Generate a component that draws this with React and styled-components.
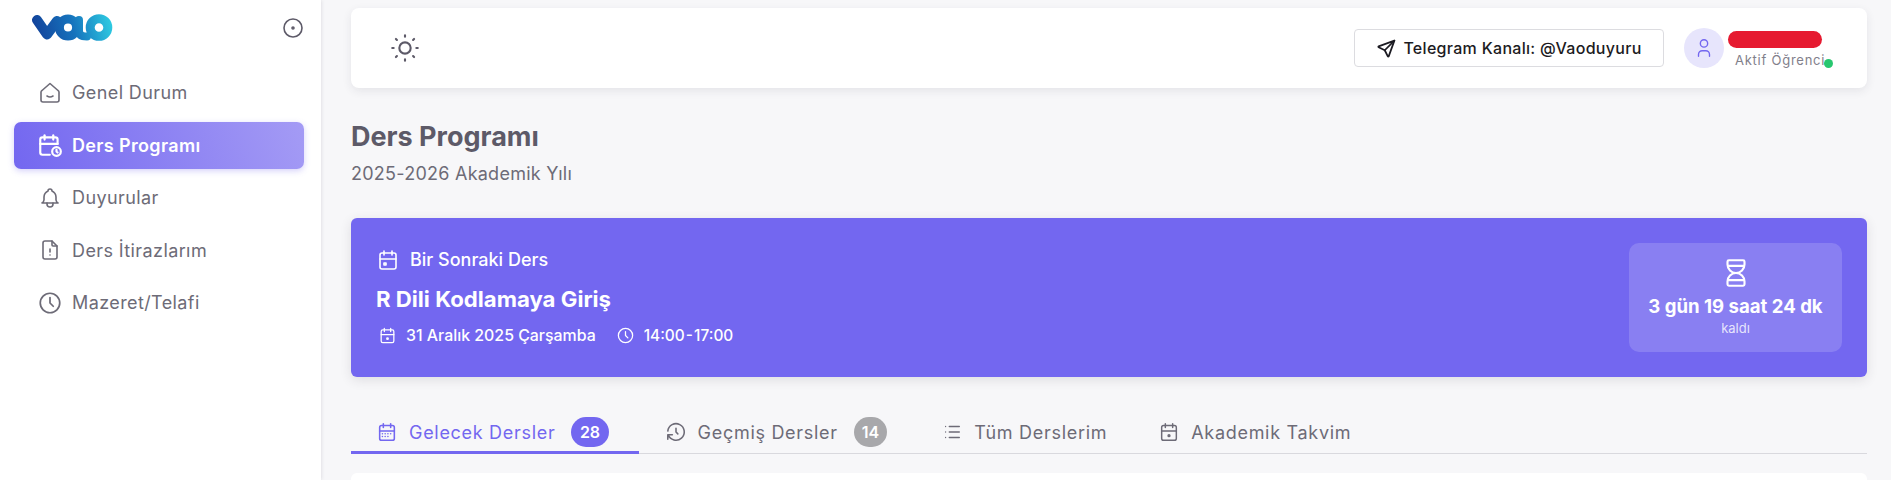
import React from "react";
import styled, { createGlobalStyle } from "styled-components";
import {
  TbBell,
  TbCalendarDue,
  TbCalendarEvent,
  TbCalendarMonth,
  TbCalendarTime,
  TbCircleDot,
  TbClock,
  TbFileAlert,
  TbHistory,
  TbHourglass,
  TbList,
  TbSend,
  TbSun,
  TbUser,
} from "react-icons/tb";

const GlobalStyle = createGlobalStyle`
  html, body {
    margin: 0;
    height: 480px;
    overflow: hidden;
    background: #f7f7f9;
    font-family: "Inter", "Liberation Sans", sans-serif;
  }
`;

const Page = styled.div`
  display: flex;
  width: 1891px;
  height: 480px;
  overflow: hidden;
`;

const Sidebar = styled.aside`
  flex: 0 0 321px;
  box-sizing: border-box;
  padding: 0 17px 0 14px;
  background: #fff;
  box-shadow: 0 0 4px rgba(47, 43, 61, 0.16);
`;

const LogoRow = styled.div`
  display: flex;
  align-items: center;
  justify-content: space-between;
  height: 56px;
  margin-right: -1px;
  padding-left: 17px;
  color: #5d5a68;
`;

const Nav = styled.nav`
  display: flex;
  flex-direction: column;
  gap: 9.5px;
  margin-top: 15px;
`;

const NavItem = styled.a`
  display: flex;
  align-items: center;
  gap: 10px;
  height: ${(p) => (p.$active ? "47px" : "43px")};
  margin: ${(p) => (p.$active ? "-2px 0" : "0")};
  padding: 0 0 0 24px;
  box-sizing: border-box;
  border-radius: 7px;
  font-size: 18px;
  font-weight: ${(p) => (p.$active ? 600 : 400)};
  letter-spacing: ${(p) => (p.$active ? "0.35px" : "0.4px")};
  color: ${(p) => (p.$active ? "#fff" : "#6d6b77")};
  background: ${(p) =>
    p.$active ? "linear-gradient(72deg, #7367f0, #a49bf5)" : "transparent"};
  box-shadow: ${(p) => (p.$active ? "0 2px 6px rgba(115, 103, 240, 0.3)" : "none")};
`;

const NavIcon = styled.span`
  display: flex;
  align-items: center;
  justify-content: center;
  width: 24px;
  overflow: visible;
  svg {
    flex: none;
  }
`;

const Main = styled.main`
  flex: 1;
  min-width: 0;
  box-sizing: border-box;
  padding: 8px 24px 0 30px;
`;

const Header = styled.header`
  display: flex;
  align-items: center;
  justify-content: space-between;
  height: 80px;
  box-sizing: border-box;
  padding: 0 40px 0 37px;
  background: #fff;
  border-radius: 8px;
  box-shadow: 0 3px 10px rgba(47, 43, 61, 0.09);
  color: #5d5a68;
`;

const HeaderRight = styled.div`
  display: flex;
  align-items: center;
  gap: 20px;
  margin-right: 5px;
`;

const TelegramButton = styled.button`
  display: flex;
  align-items: center;
  justify-content: center;
  gap: 6px;
  width: 310px;
  height: 38px;
  padding: 0;
  background: #fff;
  border: 1px solid #dcdce0;
  border-radius: 4px;
  font-family: inherit;
  font-size: 16px;
  font-weight: 500;
  letter-spacing: 0.3px;
  color: #1c1b22;
`;

const User = styled.div`
  position: relative;
  display: flex;
  align-items: center;
  gap: 4px;
`;

const Avatar = styled.div`
  display: flex;
  align-items: center;
  justify-content: center;
  width: 40px;
  height: 40px;
  border-radius: 50%;
  background: #e7e5fc;
  color: #7367f0;
`;

const UserText = styled.div`
  display: flex;
  flex-direction: column;
  width: 94px;
  padding-top: 2px;
`;

const Redacted = styled.div`
  height: 17px;
  border-radius: 9px;
  background: #e61a30;
`;

const UserRole = styled.div`
  margin: 4px 0 0 7px;
  white-space: nowrap;
  font-size: 13px;
  line-height: 16px;
  letter-spacing: 0.75px;
  color: #82808b;
`;

const OnlineDot = styled.span`
  position: absolute;
  right: -11px;
  bottom: 0;
  width: 9px;
  height: 9px;
  border-radius: 50%;
  background: #28c76f;
`;

const Title = styled.h1`
  margin: 33px 0 0;
  font-size: 27px;
  line-height: 32px;
  font-weight: 700;
  color: #5d5a68;
`;

const Subtitle = styled.p`
  margin: 9px 0 0;
  font-size: 18px;
  line-height: 23px;
  letter-spacing: 0.25px;
  color: #6d6b77;
`;

const Hero = styled.section`
  display: flex;
  align-items: center;
  justify-content: space-between;
  height: 159px;
  margin-top: 33px;
  box-sizing: border-box;
  padding: 0 25px 0 26px;
  border-radius: 6px;
  background: #7367f0;
  color: #fff;
  box-shadow: 0 3px 12px rgba(47, 43, 61, 0.12);
`;

const HeroText = styled.div`
  margin: 0 0 2px -1px;
`;

const HeroLabel = styled.div`
  display: flex;
  align-items: center;
  gap: 10px;
  font-size: 18px;
  font-weight: 500;
  line-height: 24px;
`;

const HeroName = styled.div`
  margin-top: 13px;
  font-size: 22.2px;
  line-height: 28px;
  font-weight: 700;
`;

const HeroMeta = styled.div`
  display: flex;
  align-items: center;
  gap: 20px;
  margin: 13px 0 0 2px;
  font-size: 15.9px;
  font-weight: 500;
`;

const MetaItem = styled.span`
  display: flex;
  align-items: center;
  gap: 9px;
`;

const TimeRange = styled.span`
  font-size: 15.4px;
  word-spacing: -3px;
`;

const Countdown = styled.div`
  display: flex;
  flex-direction: column;
  align-items: center;
  width: 213px;
  height: 109px;
  padding-top: 13px;
  box-sizing: border-box;
  border-radius: 10px;
  background: rgba(255, 255, 255, 0.16);
`;

const CountdownValue = styled.div`
  margin-top: 3px;
  font-size: 18.6px;
  line-height: 26px;
  font-weight: 700;
`;

const CountdownNote = styled.div`
  font-size: 13px;
  line-height: 18px;
  color: rgba(255, 255, 255, 0.8);
`;

const Tabs = styled.div`
  display: flex;
  height: 45px;
  margin-top: 31px;
  border-bottom: 1px solid #d9d9de;
`;

const Tab = styled.div`
  display: flex;
  align-items: center;
  gap: 11px;
  box-sizing: border-box;
  height: 46px;
  padding: 5px ${(p) => p.$right ?? 29}px 0 ${(p) => p.$left ?? 26}px;
  font-size: 18px;
  letter-spacing: 0.7px;
  color: ${(p) => (p.$active ? "#7367f0" : "#6d6b77")};
  border-bottom: 3px solid ${(p) => (p.$active ? "#7367f0" : "transparent")};
`;

const Badge = styled.span`
  display: flex;
  align-items: center;
  justify-content: center;
  height: 30px;
  padding: 0 ${(p) => (p.$muted ? 8 : 8.5)}px;
  margin-left: 5px;
  border-radius: 15px;
  font-size: 16px;
  font-weight: 600;
  letter-spacing: 0;
  color: #fff;
  background: ${(p) => (p.$muted ? "#a8a8ab" : "#7367f0")};
`;

const Card = styled.div`
  height: 40px;
  margin-top: 19px;
  background: #fff;
  border-radius: 6px;
`;

const Logo = () => (
  <svg width="84" height="28" viewBox="0 0 84 28">
    <defs>
      <linearGradient id="vao" gradientUnits="userSpaceOnUse" x1="2" y1="24" x2="82" y2="4">
        <stop offset="0" stopColor="#123f98" />
        <stop offset="0.5" stopColor="#1673bd" />
        <stop offset="1" stopColor="#2fd0e4" />
      </linearGradient>
    </defs>
    <g fill="none" stroke="url(#vao)" strokeLinecap="round" strokeLinejoin="round">
      <path strokeWidth="10" d="M6 6 L16 20.5 L26 7" />
      <circle cx="37" cy="13.5" r="8.6" strokeWidth="9" />
      <path strokeWidth="8" d="M48 6 V17 Q48 22.5 56 22.5" />
      <circle cx="68" cy="13.5" r="8.8" strokeWidth="9" />
    </g>
  </svg>
);

const HomeSmile = () => (
  <svg width="24" height="24" viewBox="0 0 24 24" fill="none" stroke="currentColor" strokeWidth="1.6" strokeLinecap="round" strokeLinejoin="round">
    <path d="M4 9.5 L12 2.5 L20 9.5 A2 2 0 0 1 21 11 V19 A2 2 0 0 1 19 21 H5 A2 2 0 0 1 3 19 V11 A2 2 0 0 1 4 9.5 Z" />
    <path d="M9 15 Q12 17 15 15" />
  </svg>
);

const navItems = [
  { label: "Genel Durum", icon: <HomeSmile /> },
  { label: "Ders Programı", icon: <TbCalendarTime size={26} />, active: true },
  { label: "Duyurular", icon: <TbBell size={24} strokeWidth={1.6} /> },
  { label: "Ders İtirazlarım", icon: <TbFileAlert size={24} strokeWidth={1.6} /> },
  { label: "Mazeret/Telafi", icon: <TbClock size={26} strokeWidth={1.6} /> },
];

export default function App() {
  return (
    <Page>
      <GlobalStyle />
      <Sidebar>
        <LogoRow>
          <Logo />
          <TbCircleDot size={24} strokeWidth={1.6} />
        </LogoRow>
        <Nav>
          {navItems.map((item) => (
            <NavItem key={item.label} $active={item.active}>
              <NavIcon>{item.icon}</NavIcon>
              {item.label}
            </NavItem>
          ))}
        </Nav>
      </Sidebar>
      <Main>
        <Header>
          <TbSun size={34} strokeWidth={1.5} />
          <HeaderRight>
            <TelegramButton>
              <TbSend size={21} />
              Telegram Kanalı: @Vaoduyuru
            </TelegramButton>
            <User>
              <Avatar>
                <TbUser size={22} strokeWidth={1.5} />
              </Avatar>
              <UserText>
                <Redacted />
                <UserRole>Aktif Öğrenci</UserRole>
              </UserText>
              <OnlineDot />
            </User>
          </HeaderRight>
        </Header>
        <Title>Ders Programı</Title>
        <Subtitle>2025-2026 Akademik Yılı</Subtitle>
        <Hero>
          <HeroText>
            <HeroLabel>
              <TbCalendarEvent size={24} strokeWidth={1.6} />
              Bir Sonraki Ders
            </HeroLabel>
            <HeroName>R Dili Kodlamaya Giriş</HeroName>
            <HeroMeta>
              <MetaItem>
                <TbCalendarDue size={19} strokeWidth={1.6} />
                31 Aralık 2025 Çarşamba
              </MetaItem>
              <MetaItem>
                <TbClock size={19} strokeWidth={1.6} />
                <TimeRange>14:00 - 17:00</TimeRange>
              </MetaItem>
            </HeroMeta>
          </HeroText>
          <Countdown>
            <TbHourglass size={34} strokeWidth={1.5} />
            <CountdownValue>3 gün 19 saat 24 dk</CountdownValue>
            <CountdownNote>kaldı</CountdownNote>
          </Countdown>
        </Hero>
        <Tabs>
          <Tab $active $left={25} $right={30}>
            <TbCalendarMonth size={22} strokeWidth={1.7} />
            Gelecek Dersler
            <Badge>28</Badge>
          </Tab>
          <Tab>
            <TbHistory size={22} strokeWidth={1.7} />
            Geçmiş Dersler
            <Badge $muted>14</Badge>
          </Tab>
          <Tab $left={25} $right={26}>
            <TbList size={22} strokeWidth={1.4} />
            Tüm Derslerim
          </Tab>
          <Tab $left={25}>
            <TbCalendarDue size={22} strokeWidth={1.6} />
            Akademik Takvim
          </Tab>
        </Tabs>
        <Card />
      </Main>
    </Page>
  );
}
